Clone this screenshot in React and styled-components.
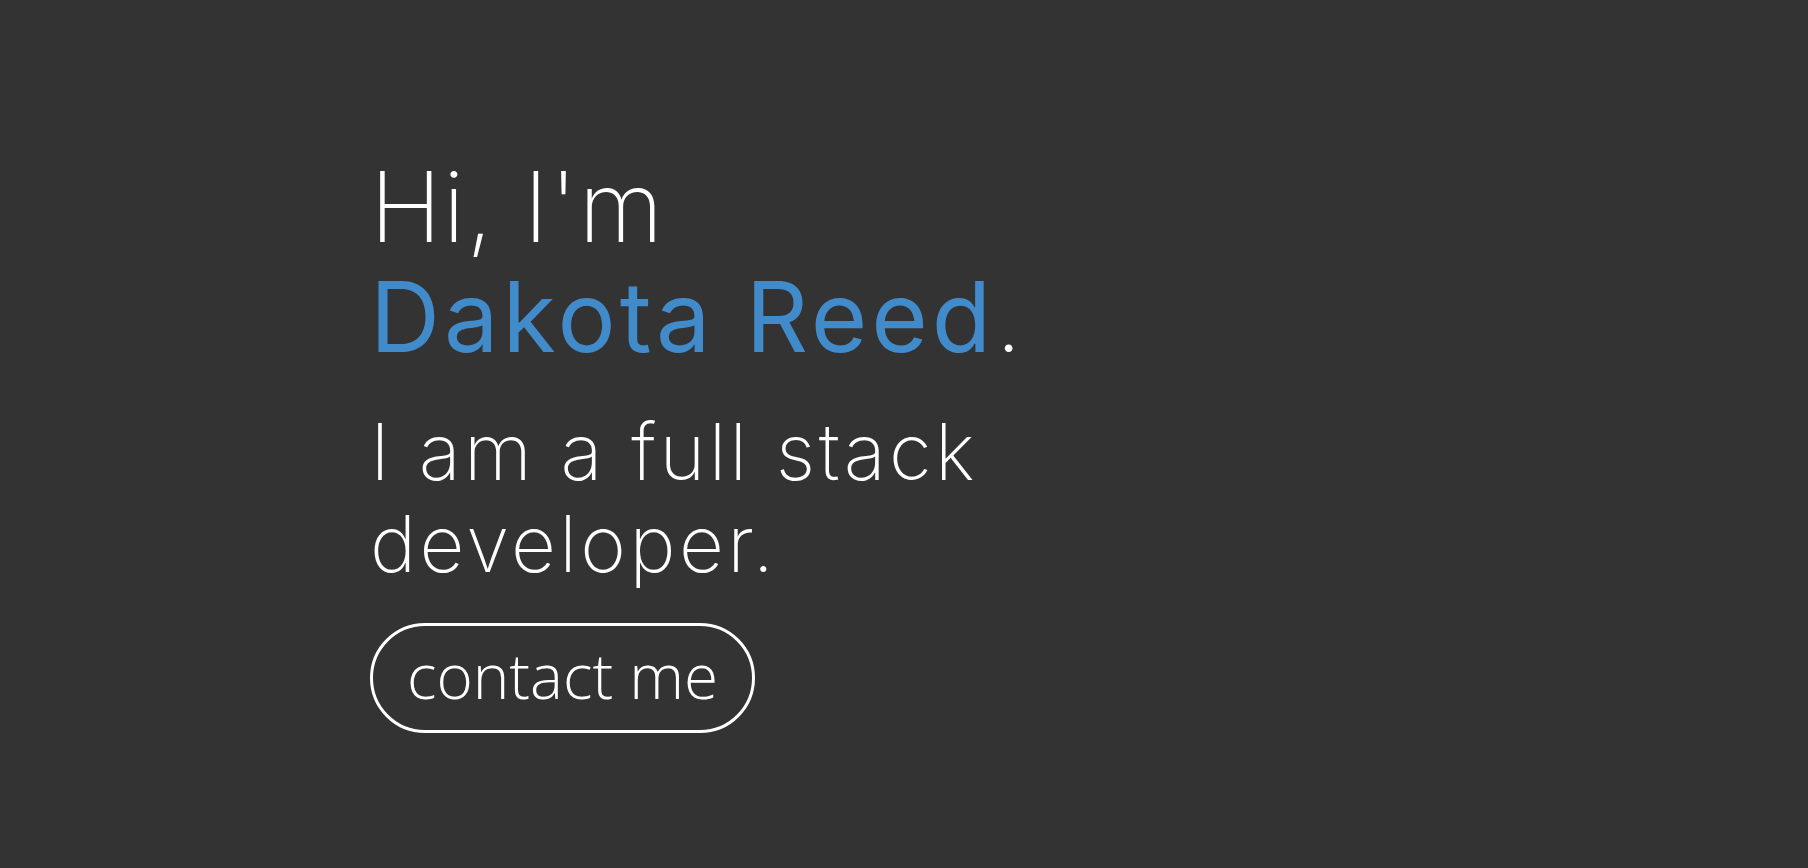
import React from "react";
import styled, {createGlobalStyle} from "styled-components";

const GlobalStyle = createGlobalStyle`
    html, body {
        margin: 0;
        padding: 0;
        background: #333333;
    }
`

const Hero = styled.section`
    display: flex;
    flex-direction: column;
    align-items: flex-start;
    min-height: 868px;
    box-sizing: border-box;
    padding: 152px 0 0 370px;
    background: #333333;
    color: #ffffff;
`

const Title = styled.h1`
    margin: 0;
    font-family: Inter, "Liberation Sans", sans-serif;
    font-size: 97px;
    line-height: 110px;
    font-weight: 200;
    letter-spacing: 1.5px;
`

const Name = styled.span`
    color: #428bca;
    font-weight: 400;
    letter-spacing: 4px;
`

const Subtitle = styled.p`
    margin: 34px 0 0;
    max-width: 640px;
    font-family: Inter, "Liberation Sans", sans-serif;
    font-size: 78px;
    line-height: 92px;
    font-weight: 200;
    letter-spacing: 3.4px;
`

const ContactButton = styled.button`
    margin-top: 33px;
    width: 385px;
    height: 110px;
    padding: 0 0 6px;
    border: 3px solid #ffffff;
    border-radius: 55px;
    background: transparent;
    color: #ffffff;
    font-family: "Open Sans", sans-serif;
    font-size: 62px;
    font-weight: 300;
    white-space: nowrap;
    cursor: pointer;
`

export default function App() {
    return (
        <>
            <GlobalStyle/>
            <Hero>
                <Title>
                    Hi, I'm<br/>
                    <Name>Dakota Reed</Name>.
                </Title>
                <Subtitle>I am a full stack developer.</Subtitle>
                <ContactButton>contact me</ContactButton>
            </Hero>
        </>
    );
}
